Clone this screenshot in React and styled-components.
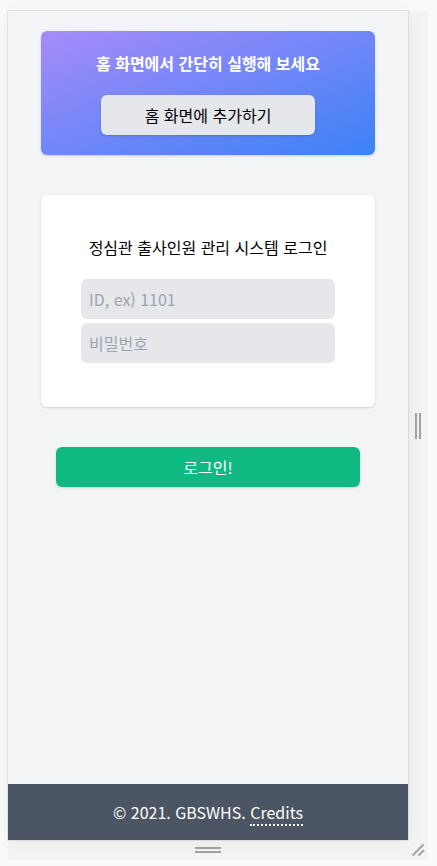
import React from "react";
import styled, { createGlobalStyle } from "styled-components";

const GlobalStyle = createGlobalStyle`
  *, *::before, *::after { box-sizing: border-box; }
  body {
    margin: 0;
    background: #fafafa;
    color: #000;
    font: 16px/24px "Noto Sans CJK KR", sans-serif;
  }
  button, input { font: inherit; }
`;

const Stage = styled.div`
  display: grid;
  grid-template-columns: minmax(0, 1fr) 20px;
  grid-template-rows: 1fr 20px;
  min-height: 100vh;
  padding: 11px 9px 6px 8px;
`;

const Screen = styled.div`
  display: flex;
  flex-direction: column;
  z-index: 1;
  background: #f3f4f6;
  box-shadow: 0 0 0 1px rgba(0, 0, 0, 0.08), 0 0 24px rgba(0, 0, 0, 0.06);
`;

const Content = styled.main`
  display: flex;
  flex: 1;
  flex-direction: column;
  align-items: center;
  gap: 40px;
  padding: 20px 0 40px;
`;

const shadow = "0 1px 3px rgba(0, 0, 0, 0.1), 0 1px 2px rgba(0, 0, 0, 0.06)";

const InstallBanner = styled.section`
  display: flex;
  flex-direction: column;
  gap: 20px;
  width: calc(100% - 66px);
  padding: 20px 60px;
  border-radius: 6px;
  background: linear-gradient(to bottom right, #a78bfa, #3b82f6);
  box-shadow: ${shadow};
`;

const BannerTitle = styled.h2`
  margin: 0 -40px;
  color: #fff;
  font-size: 16px;
  font-weight: 700;
  line-height: 24px;
  text-align: center;
`;

const Button = styled.button`
  height: 40px;
  padding: 8px;
  border: 0;
  border-radius: 6px;
  background: ${({ $primary }) => ($primary ? "#10b981" : "#e5e7eb")};
  color: ${({ $primary }) => ($primary ? "#fff" : "#000")};
  width: ${({ $primary }) => ($primary ? "76%" : "100%")};
  box-shadow: ${shadow};
  cursor: pointer;
`;

const LoginCard = styled.form`
  display: flex;
  flex-direction: column;
  gap: 20px;
  width: calc(100% - 66px);
  padding: 40px 40px 44px;
  border-radius: 6px;
  background: #fff;
  box-shadow: ${shadow};
`;

const CardTitle = styled.h1`
  margin: 0;
  font-size: 16px;
  font-weight: 400;
  line-height: 24px;
  text-align: center;
`;

const Fields = styled.div`
  display: flex;
  flex-direction: column;
  gap: 4px;
`;

const Field = styled.input`
  width: 100%;
  height: 40px;
  padding: 8px;
  border: 0;
  border-radius: 6px;
  background: #e5e7eb;
  color: #000;
  &::placeholder { color: #9ca3af; opacity: 1; }
`;

const Footer = styled.footer`
  padding: 16px;
  background: #4b5563;
  color: #fff;
  text-align: center;
`;

const CreditsLink = styled.a`
  border-bottom: 2px dotted #fff;
  color: inherit;
  text-decoration: none;
`;

const Handle = styled.button`
  display: flex;
  align-items: center;
  justify-content: center;
  padding: 0;
  border: 0;
  background: #f4f4f4;
  color: #a3a3a3;
  cursor: ${({ $cursor }) => $cursor};
`;

const Grip = styled.span`
  width: ${({ $vertical }) => ($vertical ? "6px" : "26px")};
  height: ${({ $vertical }) => ($vertical ? "26px" : "6px")};
  border: solid currentColor;
  border-width: ${({ $vertical }) => ($vertical ? "0 2px" : "2px 0")};
`;

export default function App() {
  return (
    <>
      <GlobalStyle />
      <Stage lang="ko">
        <Screen>
          <Content>
            <InstallBanner>
              <BannerTitle>홈 화면에서 간단히 실행해 보세요</BannerTitle>
              <Button type="button">홈 화면에 추가하기</Button>
            </InstallBanner>
            <LoginCard id="login" onSubmit={(event) => event.preventDefault()}>
              <CardTitle>정심관 출사인원 관리 시스템 로그인</CardTitle>
              <Fields>
                <Field aria-label="ID" placeholder="ID, ex) 1101" autoComplete="username" />
                <Field aria-label="비밀번호" type="password" placeholder="비밀번호" autoComplete="current-password" />
              </Fields>
            </LoginCard>
            <Button $primary type="submit" form="login">로그인!</Button>
          </Content>
          <Footer>
            © 2021. GBSWHS. <CreditsLink href="#credits">Credits</CreditsLink>
          </Footer>
        </Screen>
        <Handle type="button" $cursor="ew-resize" aria-label="너비 조절">
          <Grip $vertical />
        </Handle>
        <Handle type="button" $cursor="ns-resize" aria-label="높이 조절">
          <Grip />
        </Handle>
        <Handle type="button" $cursor="nwse-resize" aria-label="크기 조절">
          <svg width="20" height="20" viewBox="0 0 20 20" fill="none" stroke="currentColor" strokeWidth="2" aria-hidden="true">
            <path d="M4.5 15.5 15.5 4.5M10.5 15.5 16 10" />
          </svg>
        </Handle>
      </Stage>
    </>
  );
}
